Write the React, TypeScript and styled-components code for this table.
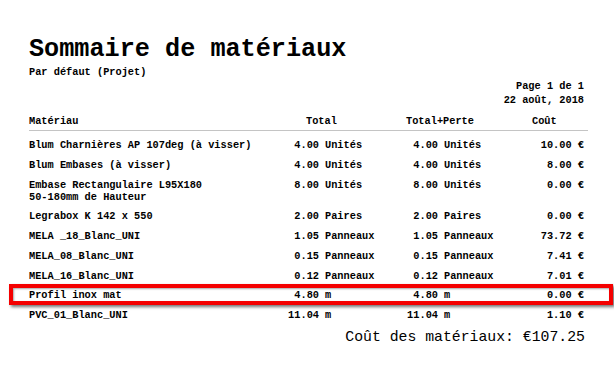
import React from "react";
import styled, { createGlobalStyle } from "styled-components";

const Global = createGlobalStyle`
  html, body { margin: 0; padding: 0; background: #ffffff; }
  body { font-family: "Liberation Mono", "Courier New", monospace; color: #000; }
`;

const Page = styled.div`
  width: 614px;
  height: 388px;
  box-sizing: border-box;
  padding: 36px 0 0 29px;
  overflow: hidden;
  background: #fff;
`;

const Content = styled.div`
  width: 559px;
  display: flex;
  flex-direction: column;
`;

const Title = styled.h1`
  margin: 0;
  font-size: 25.2px;
  line-height: 28px;
  font-weight: bold;
  letter-spacing: 0;
`;

const Sub = styled.div`
  margin-top: 2px;
  font-size: 10.3px;
  line-height: 12px;
  font-weight: bold;
`;

const PageInfo = styled.div`
  margin-top: 1px;
  width: 555px;
  text-align: right;
  font-size: 10.3px;
  line-height: 14px;
  font-weight: bold;
`;

const HeaderRow = styled.div`
  margin-top: 8px;
  display: grid;
  grid-template-columns: 277px 100px 126px 1fr;
  font-size: 10.3px;
  line-height: 12px;
  font-weight: bold;
  padding-bottom: 3px;
  border-bottom: 1px solid #c4c4c4;
`;

const Body = styled.div`
  margin-top: 4px;
  display: flex;
  flex-direction: column;
`;

const Row = styled.div`
  position: relative;
  display: grid;
  grid-template-columns: 250px 40px 70px 49px 91px 55px;
  padding: 4px 0 3.75px;
  font-size: 10.3px;
  line-height: 12px;
  font-weight: bold;
  white-space: nowrap;
`;

const Num = styled.div`
  text-align: right;
`;

const Unit = styled.div`
  padding-left: 6px;
`;

const Highlight = styled.div`
  position: absolute;
  left: -20px;
  right: -25px;
  top: -1px;
  bottom: 0px;
  border: 4px solid #f40000;
  box-shadow: 2px 2px 3px rgba(0, 0, 0, 0.55), inset 1px 1px 2px rgba(0, 0, 0, 0.35);
  pointer-events: none;
`;

const Total = styled.div`
  margin-top: 3px;
  width: 556px;
  text-align: right;
  font-size: 14.8px;
  line-height: 18px;
  font-weight: normal;
`;

type Item = {
  name: React.ReactNode;
  t: string;
  tu: string;
  p: string;
  pu: string;
  c: string;
  hl?: boolean;
};

const items: Item[] = [
  { name: "Blum Charnières AP 107deg (à visser)", t: "4.00", tu: "Unités", p: "4.00", pu: "Unités", c: "10.00 €" },
  { name: "Blum Embases (à visser)", t: "4.00", tu: "Unités", p: "4.00", pu: "Unités", c: "8.00 €" },
  {
    name: (
      <>
        Embase Rectangulaire L95X180
        <br />
        50-180mm de Hauteur
      </>
    ),
    t: "8.00",
    tu: "Unités",
    p: "8.00",
    pu: "Unités",
    c: "0.00 €",
  },
  { name: "Legrabox K 142 x 550", t: "2.00", tu: "Paires", p: "2.00", pu: "Paires", c: "0.00 €" },
  { name: "MELA _18_Blanc_UNI", t: "1.05", tu: "Panneaux", p: "1.05", pu: "Panneaux", c: "73.72 €" },
  { name: "MELA_08_Blanc_UNI", t: "0.15", tu: "Panneaux", p: "0.15", pu: "Panneaux", c: "7.41 €" },
  { name: "MELA_16_Blanc_UNI", t: "0.12", tu: "Panneaux", p: "0.12", pu: "Panneaux", c: "7.01 €" },
  { name: "Profil inox mat", t: "4.80", tu: "m", p: "4.80", pu: "m", c: "0.00 €", hl: true },
  { name: "PVC_01_Blanc_UNI", t: "11.04", tu: "m", p: "11.04", pu: "m", c: "1.10 €" },
];

export default function App() {
  return (
    <>
      <Global />
      <Page>
        <Content>
          <Title>Sommaire de matériaux</Title>
          <Sub>Par défaut (Projet)</Sub>
          <PageInfo>
            Page 1 de 1
            <br />
            22 août, 2018
          </PageInfo>
          <HeaderRow>
            <div>Matériau</div>
            <div>Total</div>
            <div>Total+Perte</div>
            <div>Coût</div>
          </HeaderRow>
          <Body>
            {items.map((it, i) => (
              <Row key={i}>
                <div>{it.name}</div>
                <Num>{it.t}</Num>
                <Unit>{it.tu}</Unit>
                <Num>{it.p}</Num>
                <Unit>{it.pu}</Unit>
                <Num>{it.c}</Num>
                {it.hl && <Highlight />}
              </Row>
            ))}
          </Body>
          <Total>Coût des matériaux: €107.25</Total>
        </Content>
      </Page>
    </>
  );
}
